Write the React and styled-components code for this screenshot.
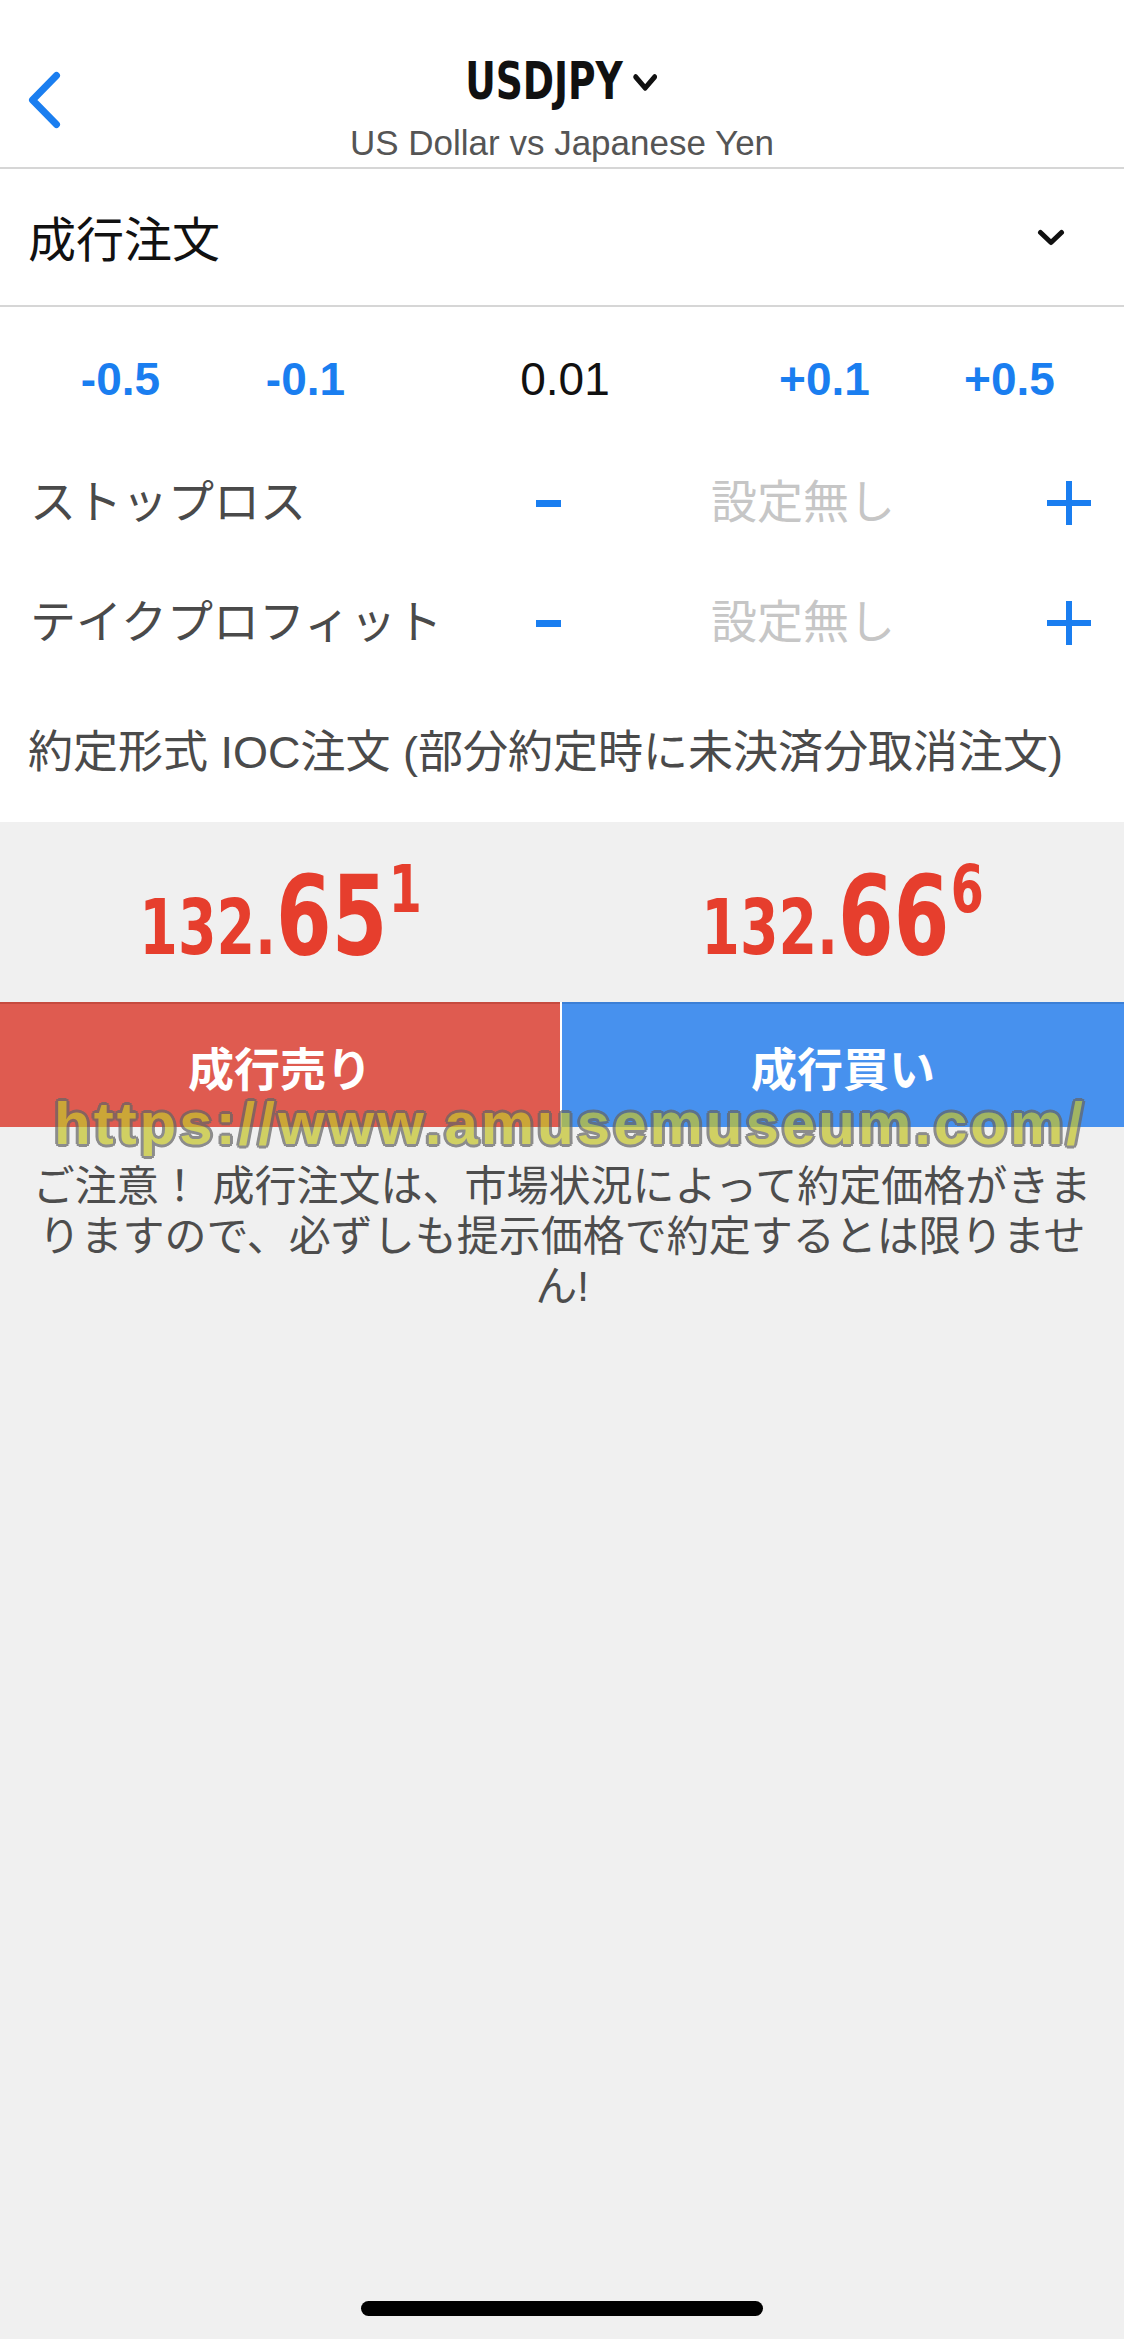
import React from "react";
import styled, { createGlobalStyle } from "styled-components";

const BLUE = "#1a7ef0";

const GlobalStyle = createGlobalStyle`
  html, body {
    margin: 0;
    padding: 0;
    background: #f0f0f0;
  }
  body {
    font-family: "Liberation Sans", "Noto Sans CJK JP", sans-serif;
    -webkit-font-smoothing: antialiased;
  }
  button {
    font-family: inherit;
  }
`;

const Page = styled.div`
  min-height: 2339px;
  display: flex;
  flex-direction: column;
  background: #f0f0f0;
`;

const Sheet = styled.div`
  background: #fff;
`;

const Header = styled.header`
  height: 167px;
  display: grid;
  grid-template-columns: 1fr auto 1fr;
  align-items: start;
  border-bottom: 2px solid #d6d6d6;
`;

const BackButton = styled.button`
  justify-self: start;
  margin-top: 68px;
  padding: 0 0 0 20px;
  border: 0;
  background: none;
  color: ${BLUE};
  display: flex;
`;

const TitleBlock = styled.div`
  margin-top: 54px;
  display: flex;
  flex-direction: column;
  align-items: center;
`;

// the app uses a condensed display face, DejaVu condensed squeezed a bit more
const TitleRow = styled.div`
  display: flex;
  align-items: center;
  gap: 12px;
  color: #111;
  transform: scaleX(0.82);
`;

const Symbol = styled.span`
  font-family: "DejaVu Sans Condensed", "DejaVu Sans", sans-serif;
  font-stretch: condensed;
  font-weight: bold;
  font-size: 51px;
  line-height: 56px;
`;

const Subtitle = styled.div`
  margin-top: 13px;
  font-size: 35px;
  line-height: 40px;
  color: #555;
`;

const OrderRow = styled.div`
  height: 136px;
  display: flex;
  align-items: center;
  justify-content: space-between;
  padding: 0 59px 0 28px;
  border-bottom: 2px solid #d6d6d6;
  color: #111;
`;

const OrderType = styled.span`
  font-family: "Noto Sans CJK JP", sans-serif;
  font-size: 48px;
  line-height: 1.2;
`;

const LotRow = styled.div`
  height: 126px;
  padding: 10px 22px 0 28px;
  display: grid;
  grid-template-columns: 185px 185px 1fr 185px 185px;
  align-items: center;
  text-align: center;
`;

const Step = styled.span`
  font-size: 46px;
  font-weight: bold;
  color: ${BLUE};
  line-height: 1.2;
`;

const Lot = styled.span`
  font-size: 46px;
  color: #111;
  line-height: 1.2;
`;

const ProtectRow = styled.div`
  height: 120px;
  display: grid;
  grid-template-columns: 1fr 58px 452px 80px;
  align-items: center;
  padding: 0 15px 0 30px;
`;

const Label = styled.span`
  font-size: 46px;
  line-height: 1.2;
  color: #4a4a4a;
  white-space: nowrap;
`;

const Minus = styled.span`
  justify-self: center;
  width: 25px;
  height: 7px;
  background: ${BLUE};
`;

const Placeholder = styled.span`
  font-size: 46px;
  line-height: 1.2;
  color: #c6c6c6;
  text-align: center;
`;

const PlusButton = styled.span`
  justify-self: center;
  display: flex;
  color: ${BLUE};
`;

const FillRow = styled.div`
  height: 139px;
  display: flex;
  align-items: center;
  padding-left: 28px;
`;

const FillText = styled.span`
  font-size: 45px;
  line-height: 1.2;
  color: #4a4a4a;
  white-space: nowrap;
`;

const Quotes = styled.div`
  display: grid;
  grid-template-columns: 1fr 1fr;
  padding: 38px 0 31px;
`;

const Quote = styled.div`
  justify-self: center;
  display: flex;
  align-items: baseline;
  color: #e63e2d;
  font-family: "DejaVu Sans Condensed", "DejaVu Sans", sans-serif;
  font-stretch: condensed;
  font-weight: bold;
  transform: scaleX(0.8);
`;

const QuoteHead = styled.span`
  font-size: 77px;
  line-height: 1;
`;

const QuotePips = styled.span`
  font-size: 111px;
  line-height: 1;
`;

const QuoteTail = styled.span`
  align-self: flex-start;
  margin: -3px 0 0 2px;
  font-size: 66px;
  line-height: 1;
`;

const Trade = styled.div`
  position: relative;
`;

const Actions = styled.div`
  display: grid;
  grid-template-columns: 560px 1fr;
  column-gap: 2px;
  background: #fff;
`;

const ActionButton = styled.button`
  height: 125px;
  border: 0;
  border-top: 2px solid ${(p) => (p.$side === "sell" ? "#c64a3f" : "#3b7fd6")};
  background: ${(p) => (p.$side === "sell" ? "#df5b50" : "#4791ee")};
  color: #fff;
  font-family: "Noto Sans CJK JP", sans-serif;
  font-weight: bold;
  font-size: 46px;
  padding: 0;
`;

const Notice = styled.p`
  margin: 35px 0 0;
  padding: 0 20px;
  font-size: 42px;
  line-height: 50px;
  color: #4d4d4d;
  text-align: center;
`;

const Watermark = styled.div`
  position: absolute;
  top: 92px;
  left: 54px;
  font-family: "Liberation Sans", sans-serif;
  font-weight: bold;
  font-size: 60px;
  line-height: 60px;
  letter-spacing: 3px;
  color: #c4c42e;
  opacity: 0.72;
  white-space: nowrap;
  pointer-events: none;
  text-shadow:
    3px 0 0 #666, -3px 0 0 #666, 0 3px 0 #666, 0 -3px 0 #666,
    2px 2px 0 #666, -2px -2px 0 #666, 2px -2px 0 #666, -2px 2px 0 #666;
`;

const Spacer = styled.div`
  flex: 1;
`;

const HomeBar = styled.div`
  align-self: center;
  width: 402px;
  height: 15px;
  margin-bottom: 23px;
  border-radius: 8px;
  background: #000;
`;

const BackIcon = () => (
  <svg width="48" height="64" viewBox="0 0 48 64" fill="none">
    <path d="M36.5 7.5 L12.5 32 L36.5 56.5" stroke="currentColor" strokeWidth="7" strokeLinecap="round" strokeLinejoin="round" />
  </svg>
);

const ChevronDown = ({ width = 28 }) => (
  <svg width={width} height={width * 17 / 28} viewBox="0 0 28 17" fill="none">
    <path d="M3.5 3.5 L14 13.5 L24.5 3.5" stroke="currentColor" strokeWidth="5" strokeLinecap="round" strokeLinejoin="round" />
  </svg>
);

const PlusIcon = () => (
  <svg width="44" height="44" viewBox="0 0 44 44">
    <rect x="19" y="0" width="6" height="44" fill="currentColor" />
    <rect x="0" y="19" width="44" height="6" fill="currentColor" />
  </svg>
);

const steps = ["-0.5", "-0.1", "0.01", "+0.1", "+0.5"];

const quotes = [
  { head: "132.", pips: "65", tail: "1" },
  { head: "132.", pips: "66", tail: "6" },
];

const App = () => {
  return (
    <Page>
      <GlobalStyle />
      <Sheet>
        <Header>
          <BackButton aria-label="back"><BackIcon /></BackButton>
          <TitleBlock>
            <TitleRow>
              <Symbol>USDJPY</Symbol>
              <ChevronDown width={31} />
            </TitleRow>
            <Subtitle>US Dollar vs Japanese Yen</Subtitle>
          </TitleBlock>
          <div />
        </Header>

        <OrderRow>
          <OrderType>成行注文</OrderType>
          <ChevronDown width={28} />
        </OrderRow>

        <LotRow>
          {steps.map((step, i) =>
            i === 2 ? <Lot key={step}>{step}</Lot> : <Step key={step}>{step}</Step>
          )}
        </LotRow>

        {["ストップロス", "テイクプロフィット"].map((label) => (
          <ProtectRow key={label}>
            <Label>{label}</Label>
            <Minus />
            <Placeholder>設定無し</Placeholder>
            <PlusButton><PlusIcon /></PlusButton>
          </ProtectRow>
        ))}

        <FillRow>
          <FillText>約定形式 IOC注文 (部分約定時に未決済分取消注文)</FillText>
        </FillRow>
      </Sheet>

      <Quotes>
        {quotes.map((q, i) => (
          <Quote key={i}>
            <QuoteHead>{q.head}</QuoteHead>
            <QuotePips>{q.pips}</QuotePips>
            <QuoteTail>{q.tail}</QuoteTail>
          </Quote>
        ))}
      </Quotes>

      <Trade>
        <Actions>
          <ActionButton $side="sell">成行売り</ActionButton>
          <ActionButton $side="buy">成行買い</ActionButton>
        </Actions>
        <Notice>
          ご注意！ 成行注文は、市場状況によって約定価格がきまりますので、必ずしも提示価格で約定するとは限りません!
        </Notice>
        <Watermark>https://www.amusemuseum.com/</Watermark>
      </Trade>

      <Spacer />
      <HomeBar />
    </Page>
  );
};

export default App;
